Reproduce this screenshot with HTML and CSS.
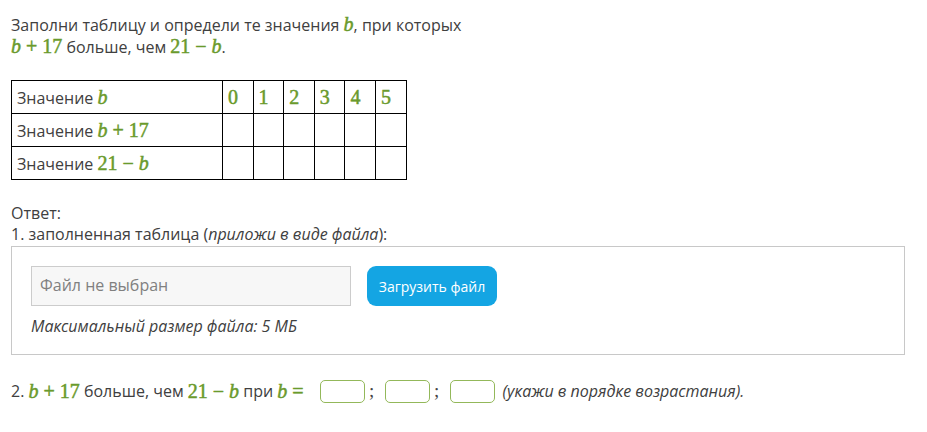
FILE: index.html
```html
<!DOCTYPE html>
<html lang="ru">
<head>
<meta charset="utf-8">
<link rel="stylesheet" href="styles.css">
</head>
<body>
<div class="page">
  <p class="task">Заполни таблицу и определи те значения <span class="m"><i>b</i></span>, при которых<br><span class="m"><i>b</i><span class="op">+</span>17</span> больше, чем <span class="m">21<span class="op">−</span><i>b</i></span>.</p>

  <table class="grid">
    <tr>
      <td class="label">Значение <span class="m"><i>b</i></span></td>
      <td class="num"><span class="m">0</span></td>
      <td class="num"><span class="m">1</span></td>
      <td class="num"><span class="m">2</span></td>
      <td class="num"><span class="m">3</span></td>
      <td class="num"><span class="m">4</span></td>
      <td class="num"><span class="m">5</span></td>
    </tr>
    <tr>
      <td class="label">Значение <span class="m"><i>b</i><span class="op">+</span>17</span></td>
      <td></td><td></td><td></td><td></td><td></td><td></td>
    </tr>
    <tr>
      <td class="label">Значение <span class="m">21<span class="op">−</span><i>b</i></span></td>
      <td></td><td></td><td></td><td></td><td></td><td></td>
    </tr>
  </table>

  <div class="answer">
    <div class="line">Ответ:</div>
    <div class="line">1. заполненная таблица (<em>приложи в виде файла</em>):</div>
    <div class="upload">
      <div class="row">
        <div class="file">Файл не выбран</div>
        <button class="btn">Загрузить файл</button>
      </div>
      <div class="hint">Максимальный размер файла: 5 МБ</div>
    </div>
    <div class="q2"><span>2.&nbsp;</span><span class="m"><i>b</i><span class="op">+</span>17</span><span>&nbsp;больше, чем&nbsp;</span><span class="m">21<span class="op">−</span><i>b</i></span><span>&nbsp;при&nbsp;</span><span class="m"><i>b</i><span class="op">=</span></span><span class="box first"></span><span class="semi">;</span><span class="box"></span><span class="semi">;</span><span class="box"></span><em class="note">(укажи в порядке возрастания).</em></div>
  </div>
</div>
</body>
</html>
```
FILE: styles.css
```css
html, body {
  margin: 0;
  padding: 0;
  background: #fff;
}
body {
  font-family: "Open Sans", "Noto Sans", sans-serif;
  font-size: 16px;
  color: #404040;
}
.page {
  padding: 14px 11px 0 11px;
}
.task {
  margin: 0;
  line-height: 21px;
}
.m {
  font-family: "Liberation Serif", "Times New Roman", serif;
  font-size: 20px;
  color: #6a9a2c;
  -webkit-text-stroke: 0.5px #6a9a2c;
  white-space: nowrap;
}
.m i {
  font-family: "Liberation Serif", "Times New Roman", serif;
  font-style: italic;
}
.op {
  margin: 0 5px;
}
.grid {
  border-collapse: collapse;
  margin-top: 22px;
}
.grid td {
  border: 1px solid #000;
  height: 32px;
  padding: 0 0 0 5px;
  width: 24.6px;
  vertical-align: middle;
}
.grid td.label {
  width: 205px;
}
.answer {
  margin-top: 23px;
}
.line {
  line-height: 21px;
}
.upload {
  border: 1px solid #c8c8c8;
  padding: 19px 19px 0 19px;
  height: 88px;
  margin-top: 1px;
  margin-right: 11px;
}
.row {
  display: flex;
  align-items: center;
  gap: 16px;
}
.file {
  width: 310px;
  height: 38px;
  border: 1px solid #ccc;
  background: #f7f7f7;
  color: #808080;
  padding-left: 8px;
  line-height: 36px;
  font-size: 16px;
}
.btn {
  height: 40px;
  width: 130px;
  border: none;
  border-radius: 9px;
  background: #14a5e3;
  color: #fff;
  font-family: "Open Sans", sans-serif;
  font-size: 14px;
  padding: 0;
}
.hint {
  font-style: italic;
  margin-top: 10px;
  line-height: 20px;
}
.q2 {
  margin-top: 24px;
  display: flex;
  align-items: center;
  height: 24px;
}
.box {
  display: inline-block;
  width: 43px;
  height: 21px;
  border: 1px solid #93b85a;
  border-radius: 5px;
  margin-left: 6px;
}
.box.first {
  margin-left: 11px;
}
.semi {
  font-family: "Liberation Serif", serif;
  font-size: 19px;
  color: #444;
  width: 14px;
  text-align: center;
}
.note {
  margin-left: 8px;
}
```
